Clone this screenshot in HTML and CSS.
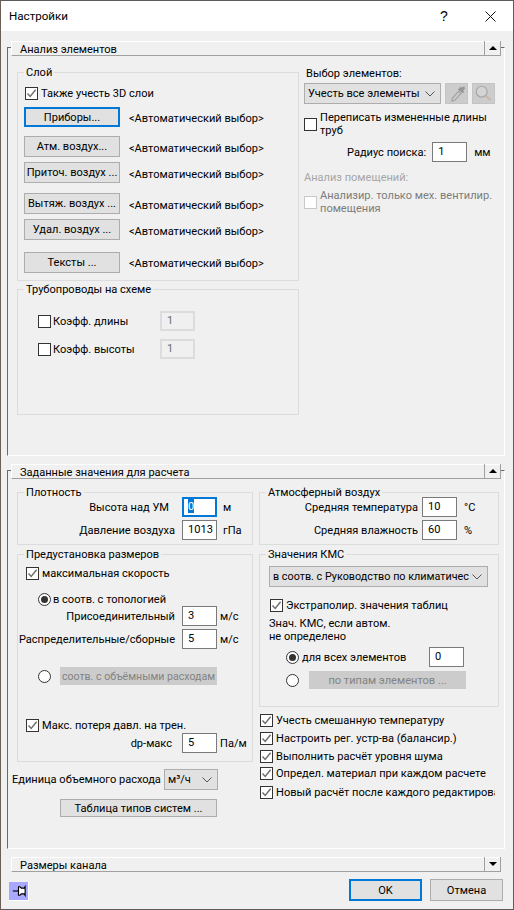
FILE: index.html
```html
<!DOCTYPE html>
<html lang="ru">
<head>
<meta charset="utf-8">
<title>Настройки</title>
<link rel="stylesheet" href="styles.css">
</head>
<body>
<svg class="defs" width="0" height="0">
  <symbol id="tick" viewBox="0 0 13 13"><path d="M2.5 6.5 5.2 9.4 10.6 2.8" fill="none" stroke="#6f6f6f" stroke-width="1.5"/></symbol>
  <symbol id="chev" viewBox="0 0 10 6"><path d="M.5.5 5 5 9.500.5" fill="none" stroke="#555" stroke-width="1"/></symbol>
</svg>
<div class="window">
  <header class="titlebar">
    <span class="title">Настройки</span>
    <span class="help">?</span>
    <svg class="close" viewBox="0 0 11 11"><path d="M.5.5l10 10M10.500.5l-10 10" stroke="#111" stroke-width="1" fill="none"/></svg>
  </header>

  <section class="section sec-a">
    <div class="strip"><span class="strip-title">Анализ элементов</span><span class="strip-btn"><i class="tri-up"></i></span></div>
    <div class="cols-a">
      <div class="col-a-left">
        <div class="group g-layer">
          <span class="legend">Слой</span>
          <label class="check c-3d"><span class="box"><svg><use href="#tick"/></svg></span>Также учесть 3D слои</label>
          <div class="btn-row r1"><button class="btn focus">Приборы...</button><span class="auto">&lt;Автоматический выбор&gt;</span></div>
          <div class="btn-row r2"><button class="btn">Атм. воздух...</button><span class="auto">&lt;Автоматический выбор&gt;</span></div>
          <div class="btn-row r3"><button class="btn">Приточ. воздух ...</button><span class="auto">&lt;Автоматический выбор&gt;</span></div>
          <div class="btn-row r4"><button class="btn">Вытяж. воздух ...</button><span class="auto">&lt;Автоматический выбор&gt;</span></div>
          <div class="btn-row r3"><button class="btn">Удал. воздух ...</button><span class="auto">&lt;Автоматический выбор&gt;</span></div>
          <div class="btn-row r5"><button class="btn">Тексты ...</button><span class="auto">&lt;Автоматический выбор&gt;</span></div>
        </div>
        <div class="group g-pipes">
          <span class="legend">Трубопроводы на схеме</span>
          <div class="coef first"><label class="check"><span class="box"></span>Коэфф. длины</label><div class="input off">1</div></div>
          <div class="coef"><label class="check"><span class="box"></span>Коэфф. высоты</label><div class="input off">1</div></div>
        </div>
      </div>
      <div class="col-a-right">
        <div class="pick-title">Выбор элементов:</div>
        <div class="pick-row">
          <div class="select s-pick"><span>Учесть все элементы</span><svg class="chev"><use href="#chev"/></svg></div>
          <span class="tool">
            <svg viewBox="0 0 23 21"><path d="M7 15.500 14 8l2.500 2.500-7 7.500-3 1z" fill="none" stroke="#a3a3a3" stroke-width="1.300"/><path d="M13 6l3-3 1.500 1L20 2.500 21 5l-2 2 1 2-2 1z" fill="#979797"/></svg>
          </span>
          <span class="tool">
            <svg viewBox="0 0 23 21"><circle cx="9.500" cy="8.500" r="6" fill="#d4d4d4" stroke="#a6a6a6" stroke-width="1.300"/><path d="M14 13l5.500 5" stroke="#c9b8a5" stroke-width="2.500"/></svg>
          </span>
        </div>
        <label class="check wrap c-rewrite"><span class="box"></span><span>Переписать измененные длины труб</span></label>
        <div class="radius"><span>Радиус поиска:</span><div class="input">1</div><span class="unit-mm">мм</span></div>
        <div class="off-title">Анализ помещений:</div>
        <label class="check wrap disabled"><span class="box"></span><span>Анализир. только мех. вентилир. помещения</span></label>
      </div>
    </div>
  </section>

  <section class="section sec-b">
    <div class="strip"><span class="strip-title">Заданные значения для расчета</span><span class="strip-btn"><i class="tri-up"></i></span></div>
    <div class="cols-b">
      <div class="col-b-left">
        <div class="group g-density">
          <span class="legend">Плотность</span>
          <div class="field f-first"><span class="lab lab-h">Высота над УМ</span><div class="input focus-in"><span class="sel">0</span></div><span class="unit">м</span></div>
          <div class="field f-next"><span class="lab">Давление воздуха</span><div class="input">1013</div><span class="unit">гПа</span></div>
        </div>
        <div class="group g-preset">
          <span class="legend">Предустановка размеров</span>
          <label class="check c-speed"><span class="box"><svg><use href="#tick"/></svg></span>максимальная скорость</label>
          <label class="radio r-topo"><span class="dot on"></span>в соотв. с топологией</label>
          <div class="field"><span class="lab">Присоединительный</span><div class="input">3</div><span class="unit u-near">м/с</span></div>
          <div class="field f-next"><span class="lab">Распределительные/сборные</span><div class="input">5</div><span class="unit u-near">м/с</span></div>
          <div class="radio r-flow"><span class="dot"></span><button class="btn off b-flow">соотв. с объёмными расходам</button></div>
          <label class="check c-loss"><span class="box"><svg><use href="#tick"/></svg></span>Макс. потеря давл. на трен.</label>
          <div class="field f-dp"><span class="lab lab-dp">dp-макс</span><div class="input">5</div><span class="unit u-near">Па/м</span></div>
        </div>
        <div class="flow-unit"><span class="flow-label">Единица объемного расхода</span><div class="select s-unit"><span>м³/ч</span><svg class="chev"><use href="#chev"/></svg></div></div>
        <button class="btn b-table">Таблица типов систем ...</button>
      </div>
      <div class="col-b-right">
        <div class="group g-air">
          <span class="legend">Атмосферный воздух</span>
          <div class="field2 f-first"><span class="lab2">Средняя температура</span><div class="input">10</div><span class="unit2">°C</span></div>
          <div class="field2 f-next"><span class="lab2">Средняя влажность</span><div class="input">60</div><span class="unit2">%</span></div>
        </div>
        <div class="group g-kms">
          <span class="legend">Значения КМС</span>
          <div class="select s-kms"><span>в соотв. с Руководство по климатичес</span><svg class="chev"><use href="#chev"/></svg></div>
          <label class="check c-extra"><span class="box"><svg><use href="#tick"/></svg></span>Экстраполир. значения таблиц</label>
          <div class="note">Знач. КМС, если автом.<br>не определено</div>
          <div class="radio r-all"><span class="dot on"></span><span class="r-all-text">для всех элементов</span><div class="input">0</div></div>
          <div class="radio r-types"><span class="dot"></span><button class="btn off b-types">по типам элементов ...</button></div>
        </div>
        <div class="opts">
          <label class="check"><span class="box"><svg><use href="#tick"/></svg></span>Учесть смешанную температуру</label>
          <label class="check o2"><span class="box"><svg><use href="#tick"/></svg></span>Настроить рег. устр-ва (балансир.)</label>
          <label class="check o2"><span class="box"><svg><use href="#tick"/></svg></span>Выполнить расчёт уровня шума</label>
          <label class="check o4"><span class="box"><svg><use href="#tick"/></svg></span>Определ. материал при каждом расчете</label>
          <label class="check o3"><span class="box"><svg><use href="#tick"/></svg></span>Новый расчёт после каждого редактирования</label>
        </div>
      </div>
    </div>
  </section>

  <section class="section sec-c">
    <div class="strip"><span class="strip-title">Размеры канала</span><span class="strip-btn"><i class="tri-down"></i></span></div>
  </section>

  <footer class="footer">
    <span class="pin"><svg viewBox="0 0 20 19"><path d="M4 9.500h8" stroke="#000" stroke-width="1.200"/><path d="M10 5h1.500l1.500 1.500h3L17 5v9l-1-1.500h-3L11.500 14H10z" fill="#fff" stroke="#000" stroke-width="1.200"/></svg></span>
    <button class="btn dlg focus b-ok">OK</button>
    <button class="btn dlg">Отмена</button>
  </footer>
</div>
</body>
</html>
```

FILE: styles.css
```css
* { box-sizing: border-box; }
html, body { margin: 0; padding: 0; }
body { width: 514px; height: 910px; overflow: hidden; background: #f0f0f0; color: #000; font: 11.050px/13px Roboto, "Liberation Sans", sans-serif; }
.defs { position: absolute; }
.window { width: 514px; height: 910px; background: #f0f0f0; border: 1px solid #5c5c5c; border-left-color: #6a5f52; display: flex; flex-direction: column; overflow: hidden; }
label { display: flex; }

.titlebar { height: 30px; flex: none; background: #fff; display: flex; align-items: center; padding-left: 8px; font-size: 11.600px; }
.title { flex: 1; }
.help { width: 12px; font: 14px "Liberation Sans", sans-serif; margin-right: 33px; }
.close { width: 11px; height: 11px; margin-right: 17px; }

.section { margin-left: 6px; width: 498px; border-top: 1px solid #696969; border-left: 1px solid #696969; border-right: 1px solid #fff; border-bottom: 1px solid #fff; }
.sec-a { margin-top: 16px; height: 409px; }
.sec-b { margin-top: 14px; height: 379px; }
.sec-c { margin-top: 14px; height: 1px; border-left: 0; border-right: 0; border-bottom: 0; border-top-color: transparent; background: linear-gradient(90deg, #696969 4px, transparent 4px, transparent 494px, #696969 494px); }

.strip { height: 15px; width: 490px; margin: -7px 0 0 3px; background: #f0f0f0; border-top: 1px solid #fff; border-left: 1px solid #fff; border-bottom: 1px solid #a0a0a0; display: flex; padding-left: 8px; }
.sec-c .strip { margin: -7px 0 0 4px; }
.strip-title { flex: 1; line-height: 15px; }
.strip-btn { width: 17px; border-left: 1px solid #a0a0a0; border-right: 1px solid #a0a0a0; margin-top: -1px; display: flex; align-items: center; justify-content: center; }
.tri-up { width: 0; height: 0; border: 4px solid transparent; border-top: 0; border-bottom: 4px solid #000; }
.tri-down { width: 0; height: 0; border: 4px solid transparent; border-bottom: 0; border-top: 4px solid #000; }

.group { border: 1px solid #dcdcdc; }
.legend { display: table; background: #f0f0f0; padding: 0 2px; margin: -7px 0 0 6px; height: 13px; }

.check { align-items: center; white-space: nowrap; }
.box { width: 13px; height: 13px; flex: none; border: 1px solid #333; background: #fff; margin-right: 3px; display: block; }
.box svg { display: block; width: 13px; height: 13px; margin: -1px; }
.wrap { white-space: normal; }

.radio { display: flex; align-items: center; white-space: nowrap; }
.dot { width: 13px; height: 13px; flex: none; border: 1px solid #333; border-radius: 50%; background: #fff; margin-right: 2px; display: flex; align-items: center; justify-content: center; }
.dot.on::after { content: ""; width: 7px; height: 7px; border-radius: 50%; background: #333; }

.btn { height: 21px; width: 96px; padding: 0; border: 1px solid #adadad; background: #e1e1e1; color: #000; font: inherit; display: flex; align-items: center; justify-content: center; white-space: nowrap; overflow: hidden; flex: none; }
.btn.focus { border: 2px solid #0078d7; }
.btn.off { background: #ccc; border-color: #ccc; color: #838383; }

.input { width: 35px; height: 20px; flex: none; background: #fff; border: 1px solid #7a7a7a; padding: 0 5px; line-height: 17px; }
.input.off { background: #f0f0f0; border: 2px solid #dcdcdc; color: #6d6d6d; line-height: 15px; }
.focus-in { border: 2px solid #0078d7; padding: 0 4px; line-height: 15px; }
.sel { background: #0078d7; color: #fff; display: inline-block; width: 6px; height: 14px; }

.select { height: 21px; background: #e1e1e1; border: 1px solid #adadad; display: flex; align-items: center; padding-left: 3px; flex: none; white-space: nowrap; overflow: hidden; }
.select > span { flex: 1; overflow: hidden; }
.chev { width: 10px; height: 6px; flex: none; margin: 0 5px 0 4px; }

.cols-a { display: flex; padding-left: 9px; margin-top: 16px; }
.col-a-left { width: 282px; }
.col-a-right { width: 190px; margin-left: 5px; }
.g-layer { height: 209px; }
.c-3d { margin: 8px 0 0 7px; }
.btn-row { display: flex; align-items: center; margin-left: 6px; }
.auto { margin: 3px 0 0 9px; white-space: nowrap; }
.r1 { margin-top: 7px; }
.r1 .btn { height: 20px; }
.r2 { margin-top: 9px; }
.r3 { margin-top: 5px; }
.r4 { margin-top: 10px; }
.r5 { margin-top: 12px; }
.r1 .auto { margin-top: 2px; }
.r5 .auto { margin-top: 1px; }
.g-pipes { height: 126px; margin-top: 8px; }
.coef { display: flex; align-items: center; margin: 15px 0 0 20px; }
.coef .check { width: 122px; }
.coef .box { margin-right: 2px; }
.coef + .coef { margin-top: 8px; }

.pick-title { margin: -5px 0 0 2px; height: 13px; }
.pick-row { display: flex; margin-top: 3px; width: 200px; }
.s-pick { width: 137px; }
.tool { width: 23px; height: 21px; flex: none; background: #ccc; border: 1px solid #c4c4c4; margin-left: 4px; display: block; }
.tool svg { display: block; width: 21px; height: 19px; }
.c-rewrite { margin-top: 7px; }
.radius { display: flex; align-items: center; margin: 5px 0 0 43px; width: 160px; }
.radius .input { margin-left: 6px; }
.unit-mm { margin-left: 7px; }
.off-title { color: #a6a6a6; margin-top: 9px; }
.disabled { margin-top: 5px; color: #7c7c7c; }
.disabled .box { border-color: #c8c8c8; }

.cols-b { display: flex; padding-left: 9px; margin-top: 13px; }
.col-b-left { width: 236px; }
.col-b-right { width: 240px; margin-left: 6px; }
.g-density, .g-air { height: 53px; }
.field, .field2 { display: flex; align-items: center; }
.lab { width: 158px; text-align: right; padding-right: 1px; white-space: nowrap; }
.lab-h { padding-right: 7px; }
.lab-dp { padding-right: 4px; }
.field .input { margin-left: 6px; }
.unit { margin-left: 6px; }
.u-near { margin-left: 3px; }
.f-first { margin-top: -2px; }
.f-next { margin-top: 3px; }
.g-preset { height: 208px; margin-top: 9px; }
.c-speed { margin: 6px 0 0 8px; }
.r-topo { margin: 13px 0 0 20px; }
.r-flow { margin: 18px 0 0 20px; }
.b-flow { width: 157px; height: 18px; margin-left: 7px; font-size: 10.600px; }
.c-loss { margin: 34px 0 0 8px; }
.f-dp { margin-top: 1px; }
.flow-unit { display: flex; align-items: center; margin: 7px 0 0 -5px; }
.flow-label { width: 152px; white-space: nowrap; }
.s-unit { width: 54px; }
.b-table { width: 157px; height: 18px; margin: 9px 0 0 43px; }

.lab2 { width: 158px; text-align: right; white-space: nowrap; }
.field2 .input { margin-left: 4px; }
.unit2 { margin-left: 7px; }
.g-kms { height: 153px; margin-top: 9px; }
.s-kms { width: 219px; margin: 5px 0 0 9px; font-size: 10.800px; }
.s-kms .chev { margin-left: 2px; }
.c-extra { margin: 12px 0 0 10px; }
.note { margin: 6px 0 0 9px; line-height: 12.500px; }
.r-all { margin: 4px 0 0 26px; }
.r-all-text { width: 127px; margin-left: 1px; }
.r-types { margin: 4px 0 0 26px; }
.b-types { width: 157px; height: 18px; margin-left: 8px; }
.opts { margin: 7px 0 0 1px; width: 235px; overflow: hidden; }
.o2 { margin-top: 5px; }
.o3 { margin-top: 6px; }
.o4 { margin-top: 4px; }

.footer { display: flex; align-items: flex-start; padding-left: 8px; margin-top: 15px; }
.pin { width: 20px; height: 19px; margin-top: 3px; background: #a8a8ff; border-right: 1px solid #fff; border-bottom: 1px solid #fff; display: block; margin-right: 320px; }
.pin svg { display: block; width: 19px; height: 18px; }
.dlg { width: 73px; height: 22px; }
.b-ok { margin-right: 8px; }
```
